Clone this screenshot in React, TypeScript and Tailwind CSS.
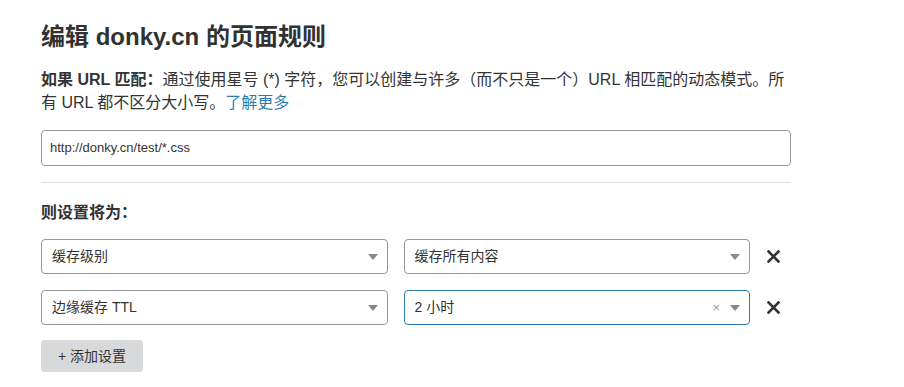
import React from "react";

const Caret = () => (
  <svg width="10" height="6" viewBox="0 0 10 6" className="shrink-0">
    <path d="M0 0 L10 0 L5 6 Z" fill="#888" />
  </svg>
);

const XIcon = () => (
  <svg width="13" height="13" viewBox="0 0 13 13">
    <path d="M1.5 1.5 L11.5 11.5 M11.5 1.5 L1.5 11.5" stroke="#333" strokeWidth="2.6" strokeLinecap="square" />
  </svg>
);

function Select({ label, active, clear }: { label: string; active?: boolean; clear?: boolean }) {
  return (
    <div
      className={`flex-1 h-[35px] rounded-[4px] border flex items-center pl-[10px] pr-[9px] bg-white ${
        active ? "border-[#2c7cb0]" : "border-[#999]"
      }`}
    >
      <span className="flex-1 text-[14px] text-[#333]">{label}</span>
      {clear && <span className="text-[13px] text-[#999] mr-[10px] leading-none">×</span>}
      <Caret />
    </div>
  );
}

export default function App() {
  return (
    <div
      className="w-[904px] h-[387px] bg-white overflow-hidden"
      style={{ fontFamily: '"Liberation Sans", "Noto Sans CJK SC", sans-serif' }}
    >
      <div className="ml-[41px] w-[750px] pt-[20px]">
        <h1 className="text-[24px] font-bold text-[#313131] leading-[34px]">编辑 donky.cn 的页面规则</h1>
        <p className="mt-[14px] text-[16px] leading-[23px] text-[#333]">
          <b>如果 URL 匹配：</b>通过使用星号 (*) 字符，您可以创建与许多（而不只是一个）URL 相匹配的动态模式。所有 URL 都不区分大小写。
          <span className="text-[#2c7cb0]">了解更多</span>
        </p>
        <div className="mt-[16px] h-[36px] rounded-[4px] border border-[#999] flex items-center px-[8px] text-[13px] text-[#333]">
          http://donky.cn/test/*.css
        </div>
        <div className="mt-[16px] h-px bg-[#dedede]" />
        <div className="mt-[18px] text-[16px] font-bold text-[#333] leading-[24px]">则设置将为：</div>
        <div className="mt-[14px] flex items-center gap-[16px]">
          <Select label="缓存级别" />
          <Select label="缓存所有内容" />
          <div className="w-[24px] flex ml-[1px]"><XIcon /></div>
        </div>
        <div className="mt-[16px] flex items-center gap-[16px]">
          <Select label="边缘缓存 TTL" />
          <Select label="2 小时" active clear />
          <div className="w-[24px] flex ml-[1px]"><XIcon /></div>
        </div>
        <button className="mt-[15px] h-[32px] w-[102px] rounded-[4px] bg-[#d8d9db] text-[14px] text-[#333]">
          + 添加设置
        </button>
      </div>
    </div>
  );
}
